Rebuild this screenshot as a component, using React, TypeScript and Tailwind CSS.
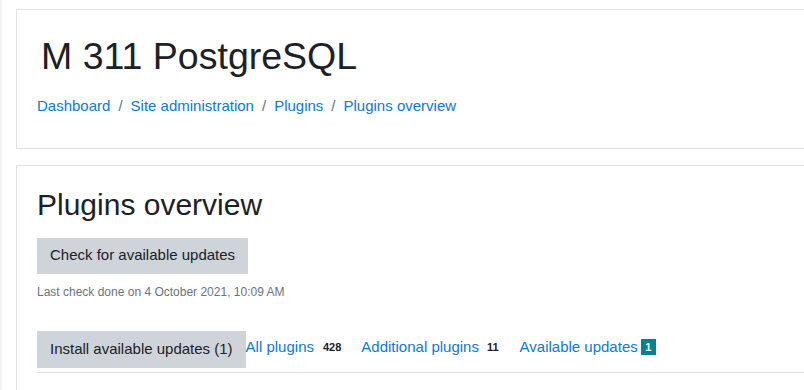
const font = "font-['Liberation_Sans',Arial,sans-serif]";

const CRUMBS = ['Dashboard', 'Site administration', 'Plugins', 'Plugins overview'];

export default function App() {
    return (
        <div className={`${font} relative h-[390px] overflow-hidden bg-white text-[#1d2125] border-l-2 border-[#f4f4f4]`}>
            <div className="pl-[14px] pt-[9px]">
                {/* Page header */}
                <header className="w-[820px] border border-[#dee2e6] bg-white pl-[20px] pt-[24px] pb-[30px]">
                    <h1 className="ml-[4px] text-[37.5px] leading-[1.2]">M 311 PostgreSQL</h1>
                    <nav className="mt-[16px] flex items-center text-[15px] leading-[1.5]">
                        {CRUMBS.map((c, i) => (
                            <span key={c} className="flex items-center">
                                {i > 0 && <span className="px-[8px] text-[#6a737b]">/</span>}
                                <a href="#" className="text-[#1177d1]">{c}</a>
                            </span>
                        ))}
                    </nav>
                </header>

                {/* Main region */}
                <section className="mt-[16px] w-[820px] h-[300px] border border-[#dee2e6] bg-white pl-[20px] pt-[21px]">
                    <h2 className="text-[30px] leading-[1.2]">Plugins overview</h2>
                    <button className="mt-[15px] h-[36px] bg-[#ced4da] px-[13px] text-[15px] leading-[1.5] text-[#1d2125]">
                        Check for available updates
                    </button>
                    <p className="mt-[9px] text-[12px] leading-[1.5] text-[#6a737b]">
                        Last check done on 4 October 2021, 10:09 AM
                    </p>
                    <div className="mt-[30px] flex items-center text-[15px] leading-[1.5]">
                        <button className="h-[37px] bg-[#ced4da] px-[13px] text-[#1d2125]">
                            Install available updates (1)
                        </button>
                        {/* filter links sit a little above the button's centre */}
                        <div className="mb-[4px] flex items-center">
                            <a href="#" className="text-[#1177d1]">All plugins</a>
                            <span className="ml-[4px] px-[5px] text-[11px] font-bold leading-none">428</span>
                            <a href="#" className="ml-[15px] text-[#1177d1]">Additional plugins</a>
                            <span className="ml-[3px] px-[5px] text-[11px] font-bold leading-none">11</span>
                            <a href="#" className="ml-[16px] text-[#1177d1]">Available updates</a>
                            <span className="ml-[3px] flex h-[16px] w-[15px] items-center justify-center bg-[#008196] text-[11px] font-bold leading-none text-white">1</span>
                        </div>
                    </div>
                    <div className="mt-[4px] border-t border-[#dee2e6]" />
                </section>
            </div>
        </div>
    );
}
